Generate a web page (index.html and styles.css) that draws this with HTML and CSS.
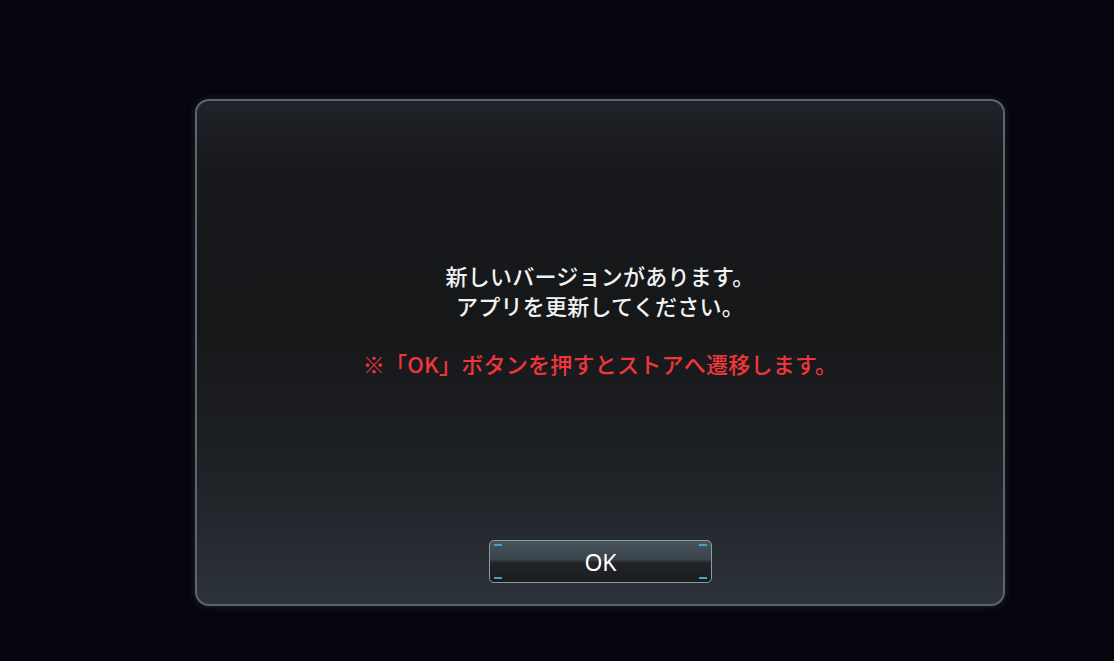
FILE: index.html
```html
<!DOCTYPE html>
<html lang="ja">
<head>
<meta charset="utf-8">
<link rel="stylesheet" href="styles.css">
</head>
<body>
<div class="screen">
  <div class="dialog">
    <div class="message">
      <p class="line">新しいバージョンがあります。</p>
      <p class="line">アプリを更新してください。</p>
      <p class="line warn">※「OK」ボタンを押すとストアへ遷移します。</p>
    </div>
    <div class="actions">
      <button class="btn">
        <span class="mark tl"></span><span class="mark tr"></span>
        <span class="mark bl"></span><span class="mark br"></span>
        OK
      </button>
    </div>
  </div>
</div>
</body>
</html>
```
FILE: styles.css
```css
html, body {
  margin: 0;
  padding: 0;
  background: #05050f;
  width: 1114px;
  height: 661px;
  overflow: hidden;
}
.screen {
  padding: 99px 0 0 195px;
}
.dialog {
  box-sizing: border-box;
  width: 810px;
  height: 507px;
  border: 2px solid #60646c;
  border-radius: 14px;
  background: linear-gradient(to bottom, #20232a 0%, #18191c 12%, #161719 45%, #1f2226 75%, #2d333c 100%);
  box-shadow: 0 0 9px rgba(130, 140, 160, 0.22);
  display: flex;
  flex-direction: column;
  font-family: "Noto Sans CJK JP", "Noto Sans", sans-serif;
}
.message {
  padding-top: 159px;
  text-align: center;
}
.line {
  margin: 0;
  font-size: 22px;
  line-height: 30px;
  font-weight: 500;
  letter-spacing: 0.25px;
  color: #f2f2f2;
}
.warn {
  margin-top: 28px;
  color: #f0363b;
}
.actions {
  margin-top: auto;
  padding: 0 0 21px 292px;
}
.btn {
  position: relative;
  box-sizing: border-box;
  width: 223px;
  height: 43px;
  border: 1.5px solid #8d9ba5;
  border-radius: 5px;
  background: linear-gradient(to bottom, #48535c 0%, #3a434a 45%, #222427 53%, #1b1c1e 100%);
  color: #ffffff;
  font-family: "Noto Sans", "Noto Sans CJK JP", sans-serif;
  font-size: 23px;
  font-weight: 400;
  line-height: 36px;
  padding: 0;
  text-align: center;
}
.mark {
  position: absolute;
  width: 8px;
  height: 2px;
  background: #3fa6c8;
}
.tl { left: 4px; top: 3px; }
.tr { right: 4px; top: 3px; }
.bl { left: 4px; bottom: 3px; }
.br { right: 4px; bottom: 3px; }
```
